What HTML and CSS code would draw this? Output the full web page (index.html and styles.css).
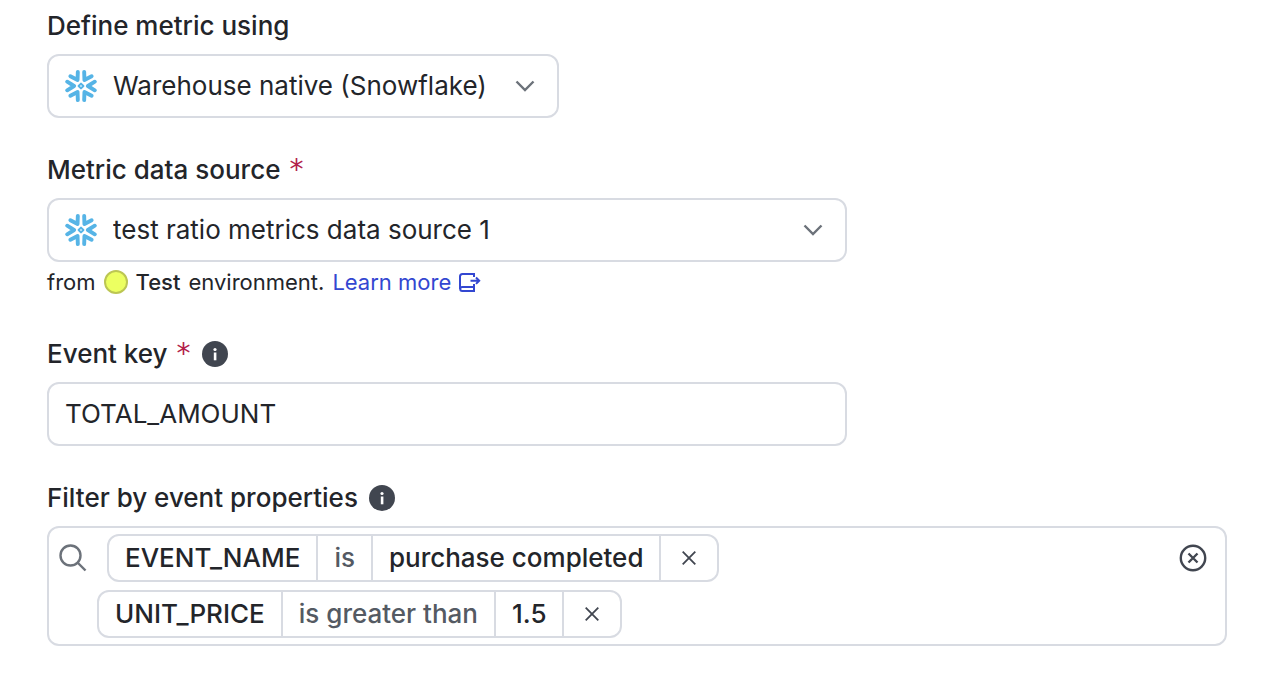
FILE: index.html
```html
<!DOCTYPE html>
<html lang="en">

<head>
    <meta charset="utf-8">
    <title>Metric definition</title>
    <link rel="stylesheet" href="styles.css">
</head>

<body>

    <!-- Shared icons -->
    <svg class="sprite" aria-hidden="true">
        <symbol id="snowflake" viewBox="-16 -17 32 34">
            <g fill="none" stroke="#56b4e6" stroke-width="3.9" stroke-linecap="round" stroke-linejoin="round">
                <path id="arm" d="M-13.800-4.300L-6.900 0l-6.900 4.300" />
                <use href="#arm" transform="rotate(60)" />
                <use href="#arm" transform="rotate(120)" />
                <use href="#arm" transform="rotate(180)" />
                <use href="#arm" transform="rotate(240)" />
                <use href="#arm" transform="rotate(300)" />
                <path d="M0-2.4L2.4 0 0 2.4-2.4 0z" stroke-width="2" />
            </g>
        </symbol>
        <symbol id="chevron" viewBox="0 0 20 12">
            <path d="M1.500 1.500L10 10l8.500-8.500" fill="none" stroke="#6c727a" stroke-width="2.4" />
        </symbol>
        <symbol id="info" viewBox="0 0 26 26">
            <circle cx="13" cy="13" r="13" fill="#414650" />
            <circle cx="13" cy="8.500" r="1.600" fill="#fff" />
            <path d="M11.800 11.500h2.600v7.800h-2.600z" fill="#fff" />
        </symbol>
        <symbol id="cross" viewBox="0 0 14 14">
            <path d="M.7.7l12.600 12.600M13.300.7L.7 13.300" fill="none" stroke="#414650" stroke-width="1.8" />
        </symbol>
    </svg>

    <form class="metric-form">
        <div class="field">
            <label class="label" for="definition">Define metric using</label>
            <div class="select select-small">
                <svg class="select-logo"><use href="#snowflake" /></svg>
                <select id="definition" class="control">
                    <option>Warehouse native (Snowflake)</option>
                </select>
                <svg class="select-chevron"><use href="#chevron" /></svg>
            </div>
        </div>

        <div class="field">
            <label class="label" for="source">Metric data source <span class="required">*</span></label>
            <div class="select">
                <svg class="select-logo"><use href="#snowflake" /></svg>
                <select id="source" class="control">
                    <option>test ratio metrics data source 1</option>
                </select>
                <svg class="select-chevron"><use href="#chevron" /></svg>
            </div>
            <div class="hint">
                <span>from</span>
                <span class="env-dot"></span>
                <strong>Test</strong>
                <span>environment.</span>
                <a href="#">Learn more
                    <svg class="link-icon" viewBox="0 0 22 20" fill="none" stroke="#3347d1" stroke-width="2">
                        <path d="M15 5V2H3.500C2 2 1 3 1 4.500V17" />
                        <path d="M15 12v7H3.200a2 2 0 0 1 0-4H15" />
                        <path d="M11.500 8.700H20M17 5.500l3.200 3.200L17 11.900" />
                    </svg>
                </a>
            </div>
        </div>

        <div class="field">
            <div class="label">
                <label class="label-text" for="event-key">Event key <span class="required">*</span></label>
                <svg class="info"><use href="#info" /></svg>
            </div>
            <input id="event-key" class="control" type="text" value="TOTAL_AMOUNT">
        </div>

        <div class="field field-wide">
            <div class="label">
                <span>Filter by event properties</span>
                <svg class="info"><use href="#info" /></svg>
            </div>
            <div class="filter">
                <svg class="search" viewBox="0 0 28 28" fill="none" stroke="#6c727a" stroke-width="2.400">
                    <circle cx="11.500" cy="11.500" r="10" />
                    <path d="M18.500 18.500l8 8" />
                </svg>
                <ul class="chips">
                    <li class="chip chip-first">
                        <span>EVENT_NAME</span>
                        <span class="operator">is</span>
                        <span>purchase completed</span>
                        <button type="button" aria-label="Remove EVENT_NAME"><svg><use href="#cross" /></svg></button>
                    </li>
                    <li class="chip">
                        <span>UNIT_PRICE</span>
                        <span class="operator">is greater than</span>
                        <span>1.5</span>
                        <button type="button" aria-label="Remove UNIT_PRICE"><svg><use href="#cross" /></svg></button>
                    </li>
                </ul>
                <button type="button" class="clear" aria-label="Clear filters">
                    <svg viewBox="0 0 28 28" fill="none" stroke="#414650" stroke-width="2.400">
                        <circle cx="14" cy="14" r="12.200" />
                        <path d="M9.500 9.500l9 9M18.500 9.500l-9 9" />
                    </svg>
                </button>
            </div>
        </div>
    </form>

</body>

</html>
```

FILE: styles.css
```css
* {
    box-sizing: border-box;
}

body {
    font-family: Inter, sans-serif;
    font-size: 26px;
    margin: 0;
    background-color: #fff;
    color: #23252a;
}

.sprite {
    position: absolute;
    width: 0;
    height: 0;
}

.metric-form {
    display: flex;
    flex-direction: column;
    gap: 32px;
    padding: 6px 45px 30px 47px;
}

.field {
    max-width: 800px;
}

.field-wide {
    max-width: none;
}

.label {
    display: flex;
    align-items: center;
    gap: 11px;
    height: 40px;
    line-height: 40px;
    margin-bottom: 8px;
    font-weight: 500;
}

label.label,
.label-text {
    display: flex;
    align-items: center;
    gap: 9px;
}

/* DejaVu has the six-armed asterisk */
.required {
    color: #b3224a;
    font-family: "DejaVu Sans", sans-serif;
    font-size: 28px;
    font-weight: 400;
}

.info {
    width: 26px;
    height: 26px;
}

.control {
    display: block;
    width: 100%;
    height: 64px;
    padding: 0 16px 2px;
    border: 2px solid #d8dbe2;
    border-radius: 12px;
    background-color: #fff;
    color: inherit;
    font: inherit;
    appearance: none;
}

.select {
    position: relative;
}

.select-small {
    max-width: 512px;
}

.select .control {
    padding: 0 64px 2px;
}

/* Icons lie over the select box */
.select-logo,
.select-chevron {
    position: absolute;
    pointer-events: none;
}

.select-logo {
    top: 15px;
    left: 18px;
    width: 32px;
    height: 34px;
}

.select-chevron {
    top: 26px;
    right: 24px;
    width: 20px;
    height: 12px;
}

/* Environment hint */
.hint {
    display: flex;
    align-items: center;
    gap: 8px;
    font-size: 22px;
    line-height: 40px;
}

.hint strong {
    font-weight: 500;
}

.env-dot {
    width: 24px;
    height: 24px;
    border: 2px solid #bcc653;
    border-radius: 50%;
    background-color: #ecff61;
}

.hint a {
    display: flex;
    align-items: center;
    gap: 8px;
    color: #3347d1;
    text-decoration: none;
}

.link-icon {
    width: 22px;
    height: 20px;
}

/* Event property filter */
.filter {
    display: flex;
    align-items: flex-start;
    gap: 10px;
    padding: 6px 18px 6px 10px;
    border: 2px solid #d8dbe2;
    border-radius: 12px;
}

.search {
    flex: none;
    width: 28px;
    height: 28px;
    margin-top: 10px;
}

.chips {
    display: flex;
    flex-direction: column;
    align-items: flex-start;
    flex: 1;
    gap: 8px;
    margin: 0;
    padding: 0;
    list-style: none;
}

.chip {
    display: flex;
    height: 48px;
    border: 2px solid #d8dbe2;
    border-radius: 12px;
    line-height: 44px;
    font-weight: 500;
}

.chip-first {
    margin-left: 10px;
}

.chip span {
    padding: 0 16px;
    border-right: 2px solid #d8dbe2;
}

.chip .operator {
    color: #545a63;
}

button {
    display: flex;
    align-items: center;
    justify-content: center;
    padding: 0;
    border: none;
    background: none;
    cursor: pointer;
}

.chip button {
    width: 56px;
}

.chip svg {
    width: 14px;
    height: 14px;
}

.clear {
    width: 28px;
    height: 48px;
}

.clear svg {
    width: 28px;
    height: 28px;
}
```
